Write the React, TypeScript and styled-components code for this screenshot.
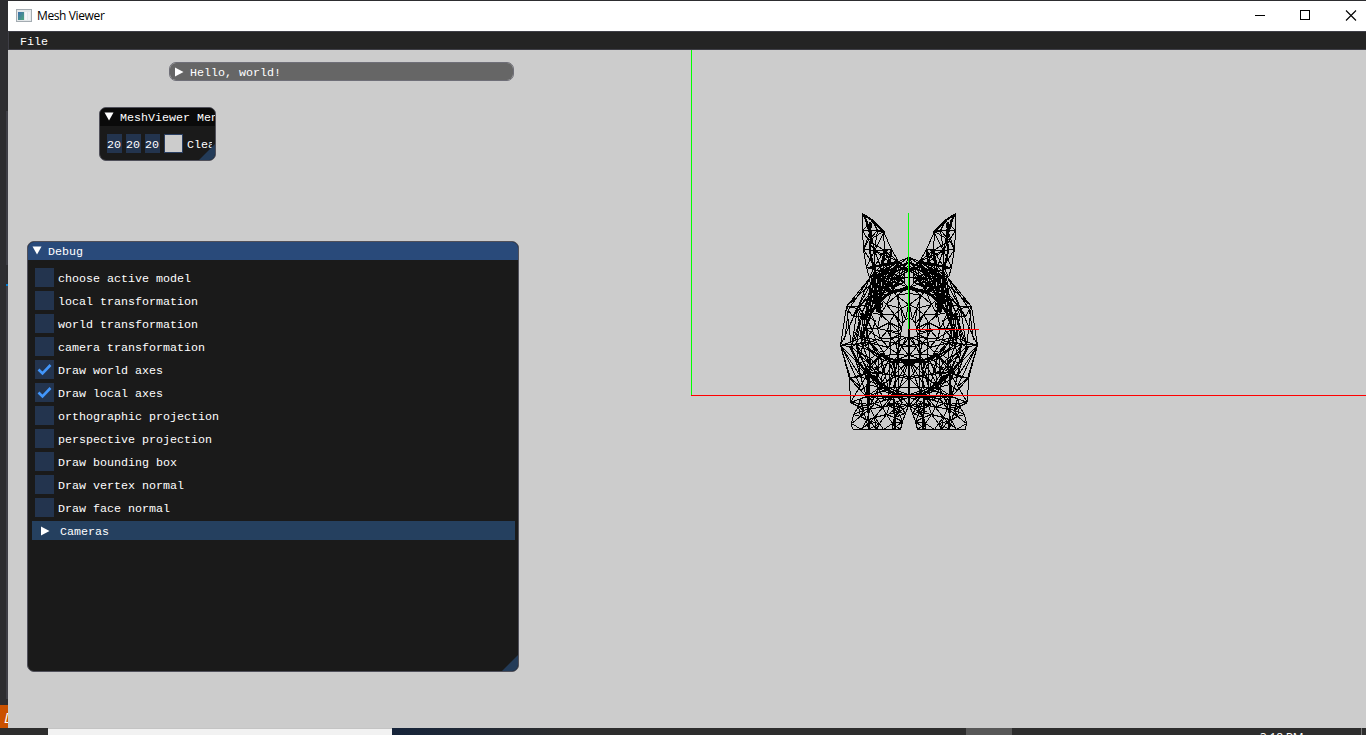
import React from "react";
import styled, { createGlobalStyle } from "styled-components";

const GlobalStyle = createGlobalStyle`
  * { box-sizing: border-box; }
  body { margin: 0; overflow: hidden; background: #2d2d30; }
`;

const Desktop = styled.div`
  width: 1366px;
  height: 735px;
  display: flex;
  flex-direction: column;
  background: #2d2d30;
  overflow: hidden;
`;

const Upper = styled.div`
  flex: 1;
  display: flex;
  min-height: 0;
`;

const Strip = styled.div`
  width: 8px;
  display: flex;
  flex-direction: column;
  align-items: flex-end;
`;

const StripPart = styled.div<{ $h: number; $w?: number; $color?: string }>`
  width: ${(p) => p.$w ?? 2}px;
  height: ${(p) => p.$h}px;
  background: ${(p) => p.$color ?? "transparent"};
`;

const StripLabel = styled.div`
  width: 8px;
  height: 23px;
  padding-left: 4px;
  background: #ca5100;
  color: #fff;
  overflow: hidden;
  font: italic 15px/24px "Open Sans", sans-serif;
`;

const AppWindow = styled.section`
  flex: 1;
  min-width: 0;
  margin-top: 1px;
  display: flex;
  flex-direction: column;
  overflow: hidden;
`;

const TitleBar = styled.header`
  height: 30px;
  margin-right: -10px;
  background: #fff;
  display: flex;
  align-items: center;
  padding-left: 8px;
`;

const Title = styled.span`
  flex: 1;
  margin-left: 5px;
  color: #000;
  font: 12px/28px "Open Sans", sans-serif;
  letter-spacing: -0.38px;
`;

const WindowButton = styled.div`
  width: 46px;
  height: 30px;
  flex: none;
  svg { display: block; }
`;

const MenuBar = styled.nav`
  height: 19px;
  background: #242424;
  border: 1px solid #3e3e46;
  border-right: 0;
  padding-left: 11px;
  color: #fff;
  font: 11.667px/20px "Liberation Mono", monospace;
`;

const Viewport = styled.main`
  position: relative;
  flex: 1;
  background: #cccccc;
  overflow: hidden;
`;

const Scene = styled.svg`
  display: block;
  shape-rendering: crispEdges;
`;

const Panel = styled.div<{ $x: number; $y: number; $w: number; $h: number; $bg: string; $line?: string }>`
  position: absolute;
  left: ${(p) => p.$x}px;
  top: ${(p) => p.$y}px;
  width: ${(p) => p.$w}px;
  height: ${(p) => p.$h}px;
  background: ${(p) => p.$bg};
  border: 1px solid ${(p) => p.$line ?? "#50505a"};
  border-radius: 7px;
  overflow: hidden;
  color: #fff;
  font: 11.667px/20px "Liberation Mono", monospace;
  white-space: pre;
`;

const PanelTitle = styled.div<{ $bg: string }>`
  height: 18px;
  padding-left: 4px;
  display: flex;
  align-items: flex-start;
  gap: 6px;
  background: ${(p) => p.$bg};
`;

const Arrow = styled.svg<{ $top?: number }>`
  width: 10px;
  height: 10px;
  margin-top: ${(p) => p.$top ?? 4}px;
  flex: none;
  fill: #fff;
`;

const Options = styled.div`
  display: flex;
  flex-direction: column;
  gap: 4px;
  padding: 8px 0 0 7px;
`;

const Option = styled.label`
  display: flex;
  height: 19px;
  gap: 4px;
  line-height: 22px;
`;

const Box = styled.span`
  width: 19px;
  height: 19px;
  background: #23344e;
  svg { display: block; }
`;

const Section = styled.div`
  display: flex;
  align-items: flex-start;
  gap: 10px;
  height: 19px;
  margin: 4px 3px 0 4px;
  padding-left: 8px;
  background: #25405f;
  line-height: 22px;
`;

const ColorRow = styled.div`
  display: flex;
  gap: 4px;
  margin: 8px 3px 0 7px;
  height: 19px;
  line-height: 22px;
  overflow: hidden;
`;

const NumberField = styled.span`
  width: 15px;
  flex: none;
  background: #23344e;
  overflow: hidden;
`;

const Swatch = styled.span`
  width: 19px;
  flex: none;
  background: #cccccc;
  border: 1px solid #2a3f62;
`;

const Grip = styled.svg`
  position: absolute;
  right: 0;
  bottom: 0;
  fill: #233b58;
`;

const TaskBar = styled.footer`
  height: 7px;
  display: flex;
  background: #2d2d2d;
  overflow: hidden;
`;

const TaskPart = styled.div<{ $w: number; $bg?: string }>`
  width: ${(p) => p.$w}px;
  flex: none;
  background: ${(p) => p.$bg ?? "transparent"};
`;

const Clock = styled.div`
  width: 101px;
  flex: none;
  padding-top: 3px;
  color: #fff;
  font: 12px/14px "Open Sans", sans-serif;
  letter-spacing: -0.2px;
`;

type Pt = [number, number];
type Seg = [Pt, Pt];

const chain = (pts: Pt[]): Seg[] => pts.slice(1).map((p, i) => [pts[i], p]);

// Triangle strip between two chains of equal length.
const strip = (a: Pt[], b: Pt[], flip = false): Seg[] => {
  const out: Seg[] = [...chain(a), ...chain(b)];
  a.forEach((p, i) => {
    out.push([p, b[i]]);
    if (i + 1 < a.length) out.push(flip ? [a[i + 1], b[i]] : [p, b[i + 1]]);
  });
  return out;
};

// Joins every pair of vertices that lie closer than r.
const web = (pts: Pt[], r: number): Seg[] => {
  const out: Seg[] = [];
  pts.forEach((p, i) =>
    pts.slice(i + 1).forEach((q) => {
      if (Math.hypot(p[0] - q[0], p[1] - q[1]) < r) out.push([p, q]);
    })
  );
  return out;
};

const body: Pt[][] = [
  [[78, 57], [68, 61], [53, 67], [39, 78], [16, 106], [10, 145], [19, 178], [20, 202], [28, 206]],
  [[78, 62], [65, 66], [50, 74], [40, 84], [27, 108], [21, 146], [30, 176], [36, 196], [40, 204]],
  [[78, 68], [62, 71], [47, 84], [40, 95], [32, 111], [26, 144], [37, 172], [48, 188], [54, 200]],
  [[78, 77], [60, 80], [50, 90], [42, 104], [34, 120], [31, 142], [40, 165], [58, 189], [66, 196]],
  [[78, 87], [62, 90], [50, 98], [40, 112], [35, 128], [38, 142], [50, 155], [64, 160], [78, 161]],
];
const face: Pt[][] = [
  body[4],
  [[78, 93], [66, 95], [56, 104], [50, 114], [47, 128], [50, 138], [58, 147], [68, 154], [78, 155]],
  [[78, 104], [71, 108], [64, 114], [59, 122], [57, 130], [61, 138], [65, 142], [71, 146], [78, 146]],
  [[78, 118], [75, 119], [72, 123], [71, 128], [68, 131], [69, 134], [71, 136], [76, 137], [78, 138]],
];
const backRings: Pt[][] = [
  [[78, 89], [60, 93], [49, 101], [41, 113], [36, 127], [39, 141], [50, 153], [63, 159], [78, 160]],
  [[78, 86], [58, 92], [47, 103], [38, 118], [33, 130], [35, 146], [48, 158], [62, 162], [78, 159]],
];
const belly: Pt[][] = [
  [[50, 155], [58, 160], [66, 162], [78, 163]],
  [[38, 166], [52, 172], [65, 176], [78, 178]],
  [[36, 172], [50, 185], [63, 193], [78, 195]],
];
const ear: Pt[] = [
  [32, 13], [42, 20], [53, 31], [61, 49], [68, 61], [32, 30], [33, 49], [36, 67], [39, 77],
  [40, 30], [38, 40], [47, 30], [44, 50], [54, 50], [50, 66], [44, 66], [60, 62],
];
const innerEar: Pt[] = [
  [33, 14], [37, 21], [40, 36], [40, 50], [42, 64], [47, 75], [50, 88], [52, 106], [47, 112], [46, 92],
];
const foot: Pt[] = [
  [28, 206], [23, 214], [21, 223], [22, 229], [31, 229], [38, 229], [46, 229], [53, 229],
  [62, 229], [70, 229], [72, 221], [75, 213], [78, 205], [70, 206], [66, 203], [60, 197], [48, 198],
  [38, 196], [33, 210], [40, 208], [44, 217], [52, 207], [56, 214], [64, 217], [59, 205], [36, 220],
  [49, 223], [72, 197], [30, 216], [62, 223], [40, 221], [68, 212], [30, 198], [44, 203],
];
const crown: Pt[] = [
  [78, 57], [74, 66], [68, 61], [63, 72], [69, 78], [74, 82], [58, 86], [52, 78], [56, 68], [46, 76],
  [42, 86], [51, 94], [44, 100], [60, 94], [40, 92], [65, 86], [48, 110], [53, 115],
];
const cheek: Pt[] = [
  [16, 106], [22, 116], [28, 106], [39, 104], [35, 116], [45, 120], [24, 132], [34, 140], [42, 130],
  [46, 142], [30, 153], [40, 158], [52, 150], [26, 164], [34, 172], [47, 166], [56, 158],
  [30, 190], [38, 184], [46, 176], [52, 188],
];

const segments: Seg[] = [
  ...strip(body[0], body[1]),
  ...strip(body[1], body[2], true),
  ...strip(body[2], body[3]),
  ...strip(body[3], body[4], true),
  ...strip(body[1], body[3]),
  ...strip(body[2], body[4]),
  ...strip(face[0], face[1]),
  ...strip(face[1], face[2], true),
  ...strip(face[2], face[3]),
  ...strip(backRings[0], backRings[1]),
  ...strip(belly[0], belly[1]),
  ...strip(belly[1], belly[2], true),
  ...chain([[19, 146], [27, 162], [40, 176], [53, 188], [66, 195], [78, 196]]),
  ...chain([[20, 146], [28, 161], [41, 176], [54, 188], [67, 194], [78, 195]]),
  ...chain([[30, 120], [25, 138], [28, 153], [40, 173], [56, 187], [78, 194]]),
  ...web(ear, 21),
  ...web(innerEar, 24),
  ...web(crown, 18),
  ...web(cheek, 16),
  ...web(foot, 13),
  // long edges running from the crown and shoulders across the body
  ...chain([[39, 78], [18, 109], [14, 140]]),
  ...chain([[40, 84], [16, 106], [21, 146], [30, 176]]),
  ...chain([[42, 90], [27, 108], [10, 145]]),
  ...chain([[46, 76], [32, 111], [21, 146]]),
  ...chain([[10, 145], [20, 178], [38, 172], [20, 202]]),
  ...chain([[12, 148], [30, 186], [20, 178]]),
  ...chain([[10, 145], [38, 173]]),
  ...chain([[78, 62], [46, 76], [78, 77]]),
  ...chain([[68, 61], [47, 92], [78, 70]]),
  ...chain([[36, 67], [60, 74], [78, 66]]),
  ...chain([[39, 77], [66, 68], [50, 98]]),
  ...chain([[56, 66], [78, 87], [60, 80], [40, 112]]),
  ...chain([[61, 49], [52, 80], [54, 50], [47, 84]]),
  ...chain([[68, 61], [44, 50], [54, 31]]),
  ...chain([[42, 66], [46, 112], [56, 70]]),
  ...chain([[78, 57], [78, 205]]),
  ...chain([[38, 173], [38, 229]]),
  ...chain([[37, 173], [37, 212]]),
  ...chain([[60, 122], [59, 190]]),
  ...chain([[68, 95], [68, 193]]),
  ...chain([[48, 153], [47, 198]]),
  ...chain([[71, 128], [66, 165], [58, 189]]),
  ...chain([[10, 145], [33, 137], [78, 145]]),
  ...chain([[10, 145], [30, 143], [50, 155]]),
  ...chain([[19, 178], [37, 172], [56, 174], [78, 176]]),
  ...chain([[56, 187], [78, 187]]),
  ...chain([[60, 190], [73, 203], [60, 212]]),
  ...chain([[78, 197], [56, 205], [66, 192], [72, 205]]),
];

const heavy: Seg[] = [
  ...chain([[33, 14], [42, 20], [53, 31]]),
  ...chain([[39, 22], [41, 36], [39, 50], [43, 65]]),
  ...chain([[44, 66], [45, 90], [52, 117]]),
  ...chain([[41, 78], [48, 98], [48, 112]]),
  ...chain([[78, 88], [62, 91], [51, 99]]),
  ...chain([[38, 173], [52, 187], [64, 193], [78, 195]]),
  ...chain([[70, 161], [78, 161]]),
  ...chain([[63, 198], [65, 229]]),
  ...chain([[38, 174], [38, 204]]),
  ...chain([[60, 197], [78, 195]]),
];

const toPath = (segs: Seg[]) =>
  segs.map(([a, b]) => `M${a[0]} ${a[1]}L${b[0]} ${b[1]}`).join("");

const Bunny = () => (
  <g transform="translate(830.5 200.5)" fill="none" stroke="#000">
    {["", "translate(157 0) scale(-1 1)"].map((t) => (
      <g key={t} transform={t}>
        <path d={toPath(segments)} strokeWidth="1" />
        <path d={toPath(heavy)} strokeWidth="2" />
      </g>
    ))}
  </g>
);

const Down = () => (
  <Arrow viewBox="0 0 10 10"><path d="M0.5 0.5H9.5L5 8.5Z" /></Arrow>
);
const Right = ({ top }: { top?: number }) => (
  <Arrow $top={top} viewBox="0 0 10 10"><path d="M1 0.5V9.5L9.5 5Z" /></Arrow>
);

const options: [string, boolean][] = [
  ["choose active model", false],
  ["local transformation", false],
  ["world transformation", false],
  ["camera transformation", false],
  ["Draw world axes", true],
  ["Draw local axes", true],
  ["orthographic projection", false],
  ["perspective projection", false],
  ["Draw bounding box", false],
  ["Draw vertex normal", false],
  ["Draw face normal", false],
];

export default function App() {
  return (
    <Desktop>
      <GlobalStyle />
      <Upper>
        <Strip>
          <StripPart $h={111} />
          <StripPart $h={154} $color="#3f3f46" />
          <StripPart $h={19} />
          <StripPart $h={2} $color="#007acc" />
          <StripPart $h={413} $color="#3f3f46" />
          <StripPart $h={6} />
          <StripLabel>D</StripLabel>
        </Strip>
        <AppWindow>
          <TitleBar>
            <svg width="16" height="14" viewBox="0 0 16 14">
              <defs>
                <linearGradient id="pane" x1="0" y1="0" x2="1" y2="1">
                  <stop offset="0" stopColor="#3d6fae" />
                  <stop offset="1" stopColor="#4fa67c" />
                </linearGradient>
              </defs>
              <rect x="0.5" y="0.5" width="15" height="12" fill="#e4e8ea" stroke="#a4acb2" />
              <rect x="2" y="3" width="6" height="8" fill="url(#pane)" />
              <rect x="9" y="3" width="2" height="8" fill="#f4f6f8" />
              <rect x="12" y="3" width="2" height="8" fill="#f0f2f4" />
            </svg>
            <Title>Mesh Viewer</Title>
            <WindowButton>
              <svg width="46" height="30"><path d="M17 14.5H27" stroke="#000" /></svg>
            </WindowButton>
            <WindowButton>
              <svg width="46" height="30"><rect x="16.5" y="9.5" width="9" height="9" fill="none" stroke="#000" /></svg>
            </WindowButton>
            <WindowButton>
              <svg width="46" height="30"><path d="M16 9.5L26 19.5M26 9.5L16 19.5" stroke="#000" strokeWidth="1.1" /></svg>
            </WindowButton>
          </TitleBar>
          <MenuBar>File</MenuBar>
          <Viewport>
            <Scene width="1358" height="678" viewBox="8 50 1358 678">
              <Bunny />
              <path d="M691.5 50V395" stroke="#00ff00" />
              <path d="M691 395.5H1366" stroke="#ff0000" />
              <path d="M908.5 213V329" stroke="#00ff00" />
              <path d="M909 329.5H979" stroke="#ff0000" />
            </Scene>
            <Panel $x={161} $y={12} $w={345} $h={19} $bg="#666666" $line="#6f6f78">
              <PanelTitle $bg="#666666"><Right />Hello, world!</PanelTitle>
            </Panel>
            <Panel $x={91} $y={57} $w={117} $h={54} $bg="#1a1a1a">
              <PanelTitle $bg="#0a0a0a"><Down />MeshViewer Menu</PanelTitle>
              <ColorRow>
                <NumberField>20</NumberField>
                <NumberField>20</NumberField>
                <NumberField>20</NumberField>
                <Swatch />
                Clear color
              </ColorRow>
              <Grip width="16" height="16"><path d="M16 0V16H0Z" /></Grip>
            </Panel>
            <Panel $x={19} $y={191} $w={492} $h={431} $bg="#1a1a1a">
              <PanelTitle $bg="#294a7a"><Down />Debug</PanelTitle>
              <Options>
                {options.map(([label, on]) => (
                  <Option key={label}>
                    <Box>
                      {on && (
                        <svg width="19" height="19">
                          <path d="M3.5 9.5L7.5 13.5L15.5 5" fill="none" stroke="#4296fa" strokeWidth="2.6" />
                        </svg>
                      )}
                    </Box>
                    {label}
                  </Option>
                ))}
              </Options>
              <Section><Right top={5} />Cameras</Section>
              <Grip width="16" height="16"><path d="M16 0V16H0Z" /></Grip>
            </Panel>
          </Viewport>
        </AppWindow>
      </Upper>
      <TaskBar>
        <TaskPart $w={48} />
        <TaskPart $w={344} $bg="linear-gradient(#c4c4c4 1px, #f2f2f2 1px)" />
        <TaskPart $w={180} $bg="linear-gradient(90deg, #16243a, #2d2d2d)" />
        <TaskPart $w={394} />
        <TaskPart $w={46} $bg="#585858" />
        <TaskPart $w={248} />
        <Clock>3:18 PM</Clock>
        <TaskPart $w={1} $bg="#777" />
      </TaskBar>
    </Desktop>
  );
}
